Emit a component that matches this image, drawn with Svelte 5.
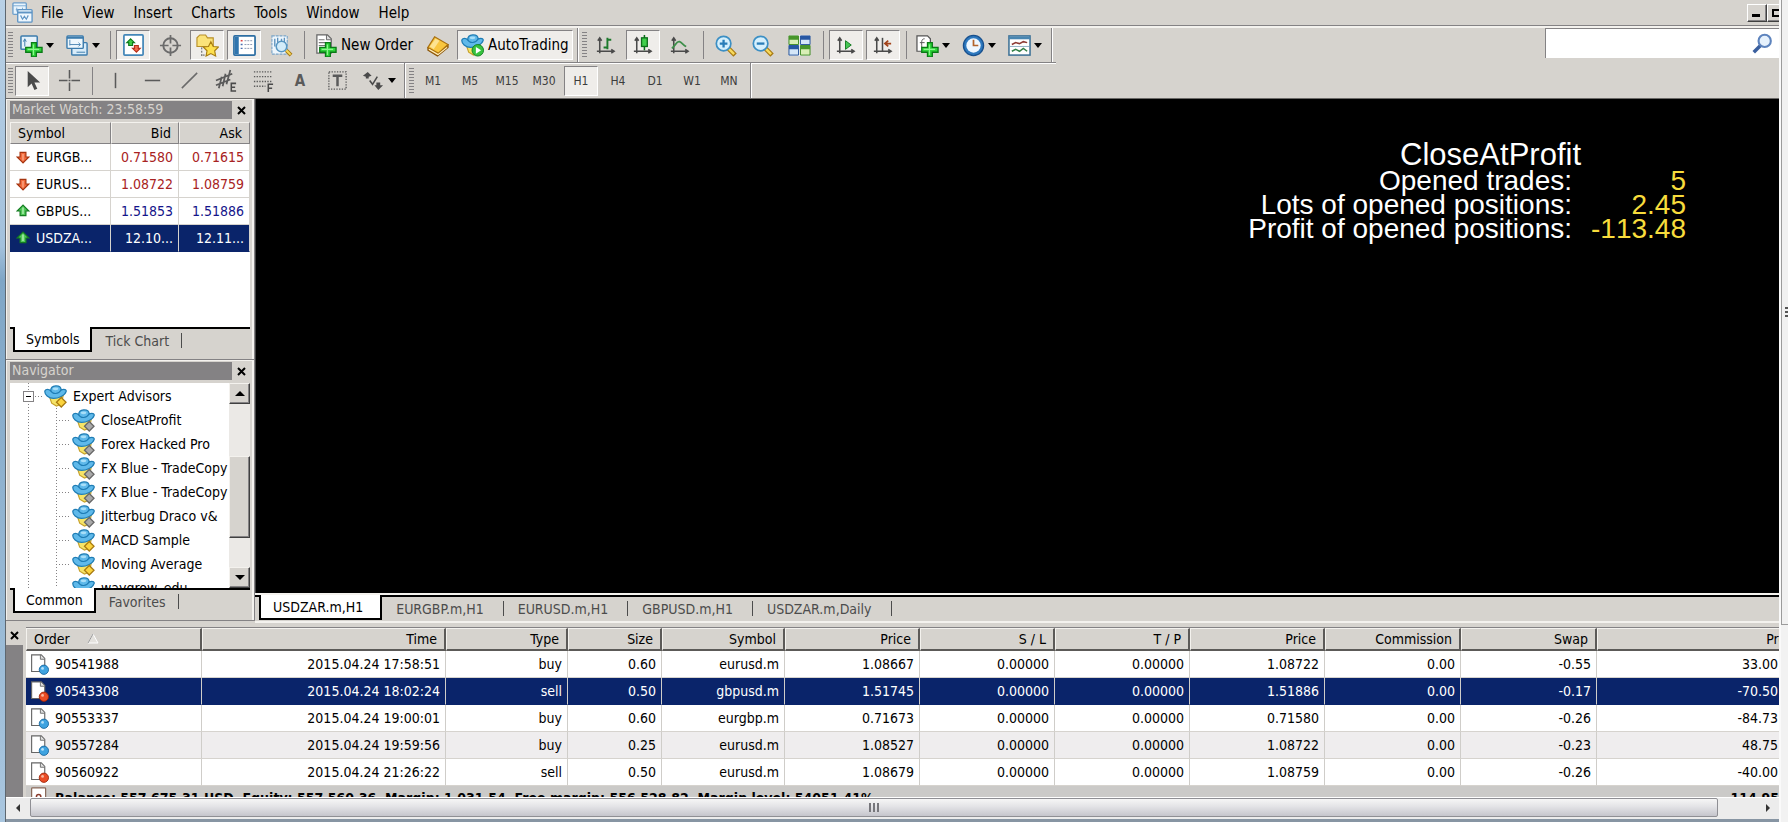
<script>
  const menus = ['File', 'View', 'Insert', 'Charts', 'Tools', 'Window', 'Help'];

  const plus = '<path d="M11 8h5v5h6v5h-6v5h-5v-5H5v-5h6z" fill="#2fd43a" stroke="#0a7a16" stroke-width="1.4"/><path d="M13 10v11M7 15h12" stroke="#8df58e" stroke-width="1.2"/>';
  const axes = '<path d="M6 20V4M3 18h18M4 7l2-3 2 3M18 16l3 2-3 2" stroke="#4a4a4a" stroke-width="1.6" fill="none"/>';
  const hat = '<path d="M5 10l3 9 5 3 5-2 2-9z" fill="#f6e468" stroke="#c6a02a" stroke-width="1.2"/><path d="M1 6c1-2 4-2 6 0 0-6 10-7 11-1 3-1 6 0 5 2-1 4-8 7-13 7S0 10 1 6z" fill="#5fb9ea" stroke="#1f7db5" stroke-width="1.3"/><path d="M7 6c2 4 8 4 11-1" stroke="#1f7db5" fill="none" stroke-width="1.2"/><ellipse cx="12" cy="4" rx="3" ry="1.5" fill="#a9dff8"/>';
  const lens = '<path d="M15 15l7 7" stroke="#a87912" stroke-width="5"/><path d="M15 15l6 6" stroke="#f7d95c" stroke-width="2.6"/><circle cx="10" cy="10" r="7.6" fill="#d6f0fd" stroke="#3c8fc4" stroke-width="1.8"/>';
  const page = '<path d="M3 1h11l4 4v15H3z" fill="#fff" stroke="#666" stroke-width="1.3"/><path d="M13 1v5h5" fill="#ddd" stroke="#666"/>';

  const art = {
    app: '<rect x="2" y="2" width="14" height="12" rx="1" fill="#e8f4fd" stroke="#6d9fcb" stroke-width="1.4"/><path d="M2 5h14M5 9h8M6 7v4M12 7v4" stroke="#7aa9d2"/><rect x="7" y="9" width="15" height="13" rx="1" fill="#eef7fe" stroke="#5e94c4" stroke-width="1.4"/><path d="M7 12h15" stroke="#5e94c4" stroke-width="2"/><path d="M10 15l2 4 2-3 2 3 2-4" fill="none" stroke="#5e94c4" stroke-width="1.2"/>',
    newChart: '<rect x="1" y="2" width="17" height="14" rx="1" fill="#e6f2fb" stroke="#3d7cad" stroke-width="1.6"/><path d="M5 13V6M3.500 8L5 5l1.500 3" stroke="#3d7cad" fill="none"/>' + '<g transform="translate(1 1)">' + plus + '</g>',
    profiles: '<rect x="6" y="9" width="16" height="13" rx="1" fill="#d9ecf9" stroke="#3d7cad" stroke-width="1.5"/><path d="M11 19h9" stroke="#3d7cad"/><rect x="1" y="2" width="17" height="13" rx="1" fill="#eef7fd" stroke="#3d7cad" stroke-width="1.5"/><path d="M1 4h17" stroke="#3d7cad" stroke-width="2"/><path d="M4 12V6M4 11h11M13 9l2 2-2 2" stroke="#4f88b5" fill="none"/>',
    watch: '<rect x="2" y="1" width="20" height="21" rx="1" fill="#fff" stroke="#4386b8" stroke-width="1.8"/><path d="M9 5l4 4h-2v3H7V9H5z" fill="#3ecb45" stroke="#0e7a1c" stroke-width="1.2"/><path d="M15 19l-4-4h2v-3h4v3h2z" fill="#f0694a" stroke="#b5301b" stroke-width="1.2"/>',
    target: '<circle cx="12" cy="12" r="7.500" fill="none" stroke="#6b6b6b" stroke-width="2"/><path d="M12 1v9M12 14v9M1 12h9M14 12h9" stroke="#6b6b6b" stroke-width="1.800"/>',
    navigator: '<path d="M1 13V4l3-3h6l2 3h6v9z" fill="#fbe37a" stroke="#b8902a" stroke-width="1.2"/><path d="M6 14v9M7 22h5" stroke="#555" stroke-dasharray="2 1.500"/><path d="M15.500 8l2.500 5 5.500.5-4 4 1 5.500-5-2.600-5 2.600 1-5.500-4-4L13 13z" fill="#fde04e" stroke="#a87d10" stroke-width="1.2"/>',
    terminal: '<rect x="1" y="2" width="22" height="20" rx="1" fill="#fff" stroke="#2d6ea3" stroke-width="1.8"/><rect x="2" y="3" width="4" height="18" fill="#2f75ae"/><path d="M8 7h2" stroke="#d44" stroke-width="1.6"/><path d="M8 11h2M8 15h2" stroke="#4a6fb0" stroke-width="1.4"/><path d="M12 7h8M12 11h8M12 15h8" stroke="#8a96b0" stroke-width="1" stroke-dasharray="2 1"/>',
    tester: '<rect x="2" y="2" width="16" height="19" fill="#eef6fc" stroke="#7aa5c8" stroke-width="1.2" stroke-dasharray="3 1"/><path d="M5 5v8M8 4v5M12 5v6M15 4v6" stroke="#5b91bd" stroke-width="1.4"/><path d="M17 17l5 5" stroke="#a87912" stroke-width="4"/><path d="M17 17l4.500 4.500" stroke="#f7d95c" stroke-width="2"/><circle cx="12" cy="13" r="5.500" fill="#d3ecfa" stroke="#5997c2" stroke-width="1.6"/>',
    order: page + '<path d="M5 6h6M5 9h10M5 12h10" stroke="#777" stroke-width="1.2"/>' + '<g transform="translate(1 1)">' + plus + '</g>',
    book: '<path d="M2 14v3l10 6 11-9v-3z" fill="#c07c14" stroke="#8a560c" stroke-width="1.2"/><path d="M2 14L9 3l14 8-10 9z" fill="#f9c63f" stroke="#a9700f" stroke-width="1.2"/><path d="M4 13l6-8 4 2-6 9z" fill="#fde391"/><path d="M3 16l9.500 5.500L22 14" stroke="#fff3c4" stroke-width="1.2" fill="none"/>',
    auto: hat + '<circle cx="17.500" cy="17" r="6" fill="#37c33f" stroke="#128020"/><path d="M15.500 13.500v7l5.500-3.500z" fill="#fff"/>',
    bars: axes + '<path d="M14 4v12M14 6h4M10 14h4" stroke="#1d7a2c" stroke-width="2"/>',
    candles: axes + '<path d="M14 1v16" stroke="#0c6e1a" stroke-width="1.6"/><rect x="11" y="4" width="6" height="9" fill="#3fcf4a" stroke="#0c6e1a" stroke-width="1.4"/>',
    line: axes + '<path d="M4 15C8 12 9 7 12 8s4 4 7 5" stroke="#3e8f4a" stroke-width="1.800" fill="none"/>',
    zoomIn: lens + '<path d="M10 6v8M6 10h8" stroke="#2a7db8" stroke-width="2.400"/>',
    zoomOut: lens + '<path d="M6 10h8" stroke="#2a7db8" stroke-width="2.400"/>',
    tile: '<rect x="1" y="1" width="22" height="22" fill="#f4f4f4"/><path d="M1 2h10v9H1zM13 12h10v10H13z" fill="#d9efb6" stroke="#3d8a22"/><path d="M13 2h10v9H13zM1 12h10v10H1z" fill="#d4e6f8" stroke="#25539b"/><path d="M1 2h10v4H1zM13 12h10v4H13z" fill="#47962a"/><path d="M13 2h10v4H13zM1 12h10v4H1z" fill="#2757a3"/>',
    scroll: axes + '<path d="M12 7v9l6-4.500z" fill="#45c653" stroke="#157a23"/>',
    shift: axes + '<path d="M12 4v14" stroke="#4a4a4a" stroke-width="1.600"/><path d="M21 10h-6M18 7l-3.500 3L18 13" stroke="#a3431a" stroke-width="1.800" fill="none"/>',
    indicators: '<path d="M1 2h11l3 3v13H1z" fill="#fff" stroke="#555" stroke-width="1.300"/><path d="M9 5c-4 0-3 4-3 9M4 9h5" stroke="#555" fill="none"/>' + '<g transform="translate(1 1)">' + plus + '</g>',
    clock: '<circle cx="12" cy="12" r="10.500" fill="#2d78be" stroke="#174f8d" stroke-width="1.400"/><circle cx="12" cy="12" r="7.500" fill="#eef7ff"/><path d="M12 6v6h5" stroke="#b2642c" stroke-width="1.800" fill="none"/>',
    template: '<rect x="1" y="2" width="22" height="20" fill="#fff" stroke="#3d7196" stroke-width="1.600"/><path d="M1 4h22" stroke="#4a86b1" stroke-width="3"/><path d="M4 11l4-2 4 1 4-2 4 1" stroke="#8d3a34" stroke-width="1.600" fill="none"/><path d="M2 13h20" stroke="#8fb0c6"/><path d="M4 18l4-2 4 2 4-3 4 3" stroke="#348048" stroke-width="1.600" fill="none"/>',
    cursor: '<path d="M7 2v17l4-4 3 7 3-1.500-3-6.500h6z" fill="#4a4a4a"/>',
    cross: '<path d="M12 1v9M12 14v9M1 12h9M14 12h9M11 12h2" stroke="#5a5a5a" stroke-width="1.600"/>',
    vline: '<path d="M12 4v16" stroke="#5a5a5a" stroke-width="1.600"/>',
    hline: '<path d="M4 12h16" stroke="#5a5a5a" stroke-width="1.600"/>',
    trend: '<path d="M4 20L20 4" stroke="#6a6a6a" stroke-width="1.600"/>',
    channel: '<path d="M1 12L18 5M1 17l15-6M4 20l3-12M8 18l3-13M12 16l4-15" stroke="#5a5a5a" stroke-width="1.800"/><path d="M22 15h-5v8h5M17 19h4" stroke="#4a4a4a" stroke-width="1.600" fill="none"/>',
    fibo: '<path d="M2 3h19M2 8h19M2 13h19M2 18h12" stroke="#5a5a5a" stroke-width="1.400" stroke-dasharray="1.400 1.400"/><path d="M22 16h-5v8M17 20h4" stroke="#4a4a4a" stroke-width="1.600" fill="none"/>',
    label: '<rect x="3" y="3" width="18" height="18" fill="none" stroke="#5a5a5a" stroke-width="1.400" stroke-dasharray="1.400 1.400"/><path d="M7 7h10M12 7v11" stroke="#5a5a5a" stroke-width="2.600"/>',
    arrows: '<path d="M1 7l5-4 4 4-3 1v2H4V8zM13 17h2v-3h4v3h3l-5 5z" fill="#4a4a4a"/><path d="M8 12l3 4 5-8" stroke="#4a4a4a" stroke-width="1.600" fill="none"/>',
    down: '<path d="M12 22L2 12h5V4h10v8h5z" fill="#f26a3c" stroke="#a5340f" stroke-width="2"/><path d="M12 18V7" stroke="#fbb594" stroke-width="2"/>',
    up: '<path d="M12 2L2 12h5v8h10v-8h5z" fill="#4fc957" stroke="#147c22" stroke-width="2"/><path d="M12 6v11" stroke="#c9f7c8" stroke-width="2"/>',
    expertOn: hat + '<path d="M18 13l5 5-5 5-5-5z" fill="#fbd43e" stroke="#a87a10" stroke-width="1.300"/>',
    expertOff: hat + '<path d="M18 13l5 5-5 5-5-5z" fill="#a9a9a9" stroke="#666" stroke-width="1.300"/>',
    buy: page + '<circle cx="17" cy="18" r="5.300" fill="#3fa3e0" stroke="#14639c"/><circle cx="15.500" cy="16.500" r="1.600" fill="#b5e0f8"/>',
    sell: page + '<circle cx="17" cy="18" r="5.300" fill="#ea4c25" stroke="#9c2408"/><circle cx="15.500" cy="16.500" r="1.600" fill="#fbb79d"/>',
    balance: '<rect x="3" y="1" width="16" height="22" rx="1" fill="#fff" stroke="#8a6a5a" stroke-width="1.400"/><circle cx="11" cy="11" r="2.500" fill="none" stroke="#8a3a2a" stroke-width="1.800"/>',
    find: '<path d="M2 22l8-8" stroke="#3a5f9e" stroke-width="4"/><circle cx="14.500" cy="9" r="7" fill="#e6f1fc" stroke="#5d83bd" stroke-width="2.400"/>',
  };

  const mainTools = [
    { icon: 'newChart', label: 'New chart', drop: true },
    { icon: 'profiles', label: 'Profiles', drop: true },
    { sep: true },
    { icon: 'watch', label: 'Market Watch', on: true },
    { icon: 'target', label: 'Data Window' },
    { icon: 'navigator', label: 'Navigator', on: true },
    { icon: 'terminal', label: 'Terminal', on: true },
    { icon: 'tester', label: 'Strategy Tester' },
    { sep: true },
    { icon: 'order', label: 'New Order', text: 'New Order' },
    { icon: 'book', label: 'MetaEditor' },
    { icon: 'auto', label: 'AutoTrading', text: 'AutoTrading', on: true },
    { grip: true },
    { icon: 'bars', label: 'Bar Chart' },
    { icon: 'candles', label: 'Candlesticks', on: true },
    { icon: 'line', label: 'Line Chart' },
    { sep: true },
    { icon: 'zoomIn', label: 'Zoom In' },
    { icon: 'zoomOut', label: 'Zoom Out' },
    { icon: 'tile', label: 'Tile Windows' },
    { sep: true },
    { icon: 'scroll', label: 'Auto Scroll', on: true },
    { icon: 'shift', label: 'Chart Shift', on: true },
    { sep: true },
    { icon: 'indicators', label: 'Indicators', drop: true },
    { icon: 'clock', label: 'Periods', drop: true },
    { icon: 'template', label: 'Templates', drop: true },
  ];

  const drawTools = [
    { icon: 'cursor', label: 'Cursor', on: true },
    { icon: 'cross', label: 'Crosshair' },
    { sep: true },
    { icon: 'vline', label: 'Vertical Line' },
    { icon: 'hline', label: 'Horizontal Line' },
    { icon: 'trend', label: 'Trendline' },
    { icon: 'channel', label: 'Equidistant Channel' },
    { icon: 'fibo', label: 'Fibonacci Retracement' },
    { glyph: 'A', label: 'Text' },
    { icon: 'label', label: 'Text Label' },
    { icon: 'arrows', label: 'Arrows', drop: true },
    { grip: true },
    ...['M1', 'M5', 'M15', 'M30', 'H1', 'H4', 'D1', 'W1', 'MN'].map((p) => ({ period: p, label: p, on: p === 'H1' })),
  ];

  const quotes = [
    { dir: 'down', symbol: 'EURGB...', bid: '0.71580', ask: '0.71615' },
    { dir: 'down', symbol: 'EURUS...', bid: '1.08722', ask: '1.08759' },
    { dir: 'up', symbol: 'GBPUS...', bid: '1.51853', ask: '1.51886' },
    { dir: 'up', symbol: 'USDZA...', bid: '12.10...', ask: '12.11...', selected: true },
  ];

  const experts = [
    ['CloseAtProfit', false],
    ['Forex Hacked Pro', false],
    ['FX Blue - TradeCopy', false],
    ['FX Blue - TradeCopy', false],
    ['Jitterbug Draco v&', false],
    ['MACD Sample', true],
    ['Moving Average', true],
    ['waygrow_edu', false],
  ];

  const stats = [
    ['Opened trades:', '5'],
    ['Lots of opened positions:', '2.45'],
    ['Profit of opened positions:', '-113.48'],
  ];

  const chartTabs = ['USDZAR.m,H1', 'EURGBP.m,H1', 'EURUSD.m,H1', 'GBPUSD.m,H1', 'USDZAR.m,Daily'];

  const columns = [
    ['Order', 176], ['Time', 244], ['Type', 122], ['Size', 94], ['Symbol', 123], ['Price', 135],
    ['S / L', 135], ['T / P', 135], ['Price', 135], ['Commission', 136], ['Swap', 136], ['Profit', null],
  ];

  const orders = [
    ['90541988', '2015.04.24 17:58:51', 'buy', '0.60', 'eurusd.m', '1.08667', '0.00000', '0.00000', '1.08722', '0.00', '-0.55', '33.00'],
    ['90543308', '2015.04.24 18:02:24', 'sell', '0.50', 'gbpusd.m', '1.51745', '0.00000', '0.00000', '1.51886', '0.00', '-0.17', '-70.50'],
    ['90553337', '2015.04.24 19:00:01', 'buy', '0.60', 'eurgbp.m', '0.71673', '0.00000', '0.00000', '0.71580', '0.00', '-0.26', '-84.73'],
    ['90557284', '2015.04.24 19:59:56', 'buy', '0.25', 'eurusd.m', '1.08527', '0.00000', '0.00000', '1.08722', '0.00', '-0.23', '48.75'],
    ['90560922', '2015.04.24 21:26:22', 'sell', '0.50', 'eurusd.m', '1.08679', '0.00000', '0.00000', '1.08759', '0.00', '-0.26', '-40.00'],
  ];
  const selectedOrder = '90543308';
</script>

{#snippet icon(name, size = 'm')}
  <svg class="icon {size}" viewBox="0 0 24 24" aria-hidden="true">{@html art[name]}</svg>
{/snippet}

{#snippet tools(items)}
  <span class="grip"></span>
  {#each items as t}
    {#if t.sep}
      <span class="sep"></span>
    {:else if t.grip}
      <span class="band"></span><span class="grip"></span>
    {:else}
      <button class="tool" class:on={t.on} class:wide={t.text} class:drop={t.drop} aria-label={t.label} aria-pressed={t.on ? 'true' : undefined}>
        {#if t.icon}{@render icon(t.icon)}{/if}
        {#if t.text}<span>{t.text}</span>{/if}
        {#if t.glyph}<b class="glyph">{t.glyph}</b>{/if}
        {#if t.period}<span class="period">{t.period}</span>{/if}
        {#if t.drop}<i class="caret"></i>{/if}
      </button>
    {/if}
  {/each}
  <span class="band"></span>
{/snippet}

{#snippet titleBar(text)}
  <header class="title">
    <h2>{text}</h2>
    <button class="close" aria-label="Close">{@render cross()}</button>
  </header>
{/snippet}

{#snippet cross()}
  <svg class="x" viewBox="0 0 9 9" aria-hidden="true"><path d="M1 1l7 7M8 1L1 8" stroke="#000" stroke-width="2" /></svg>
{/snippet}

<div class="screen">
  <div class="edge"></div>

  <main class="app">
    <div class="menubar">
      {@render icon('app')}
      <nav>
        {#each menus as m}<button>{m}</button>{/each}
      </nav>
      <div class="winbtns">
        <button aria-label="Minimize"><i class="min"></i></button>
        <button aria-label="Restore"><i class="restore"></i></button>
      </div>
    </div>

    <div class="bars">
      <div class="rows">
        <div class="toolbar first">{@render tools(mainTools)}</div>
        <div class="toolbar">{@render tools(drawTools)}</div>
      </div>
      <label class="search">
        <input type="text" aria-label="Search" />
        {@render icon('find', 's')}
      </label>
    </div>

    <div class="work">
      <aside>
        <section class="panel">
          {@render titleBar('Market Watch: 23:58:59')}
          <div class="sheet">
            <table class="quotes">
              <colgroup><col class="csym" /><col class="cbid" /><col /></colgroup>
              <thead><tr><th>Symbol</th><th>Bid</th><th>Ask</th></tr></thead>
              <tbody>
                {#each quotes as q}
                  <tr class={q.dir} class:selected={q.selected}>
                    <td class="name"><span class="sym">{@render icon(q.dir, 'xs')}{q.symbol}</span></td>
                    <td>{q.bid}</td>
                    <td>{q.ask}</td>
                  </tr>
                {/each}
              </tbody>
            </table>
          </div>
          <div class="tabs"><button class="tab active">Symbols</button><button class="tab">Tick Chart</button></div>
        </section>

        <section class="panel">
          {@render titleBar('Navigator')}
          <div class="sheet nav">
            <ul class="tree">
              <li class="root"><span class="box"></span><i class="dash"></i>{@render icon('expertOn')}Expert Advisors</li>
              {#each experts as [name, active]}
                <li><i class="dash"></i>{@render icon(active ? 'expertOn' : 'expertOff')}{name}</li>
              {/each}
            </ul>
            <div class="vbar">
              <button aria-label="Scroll up"><i class="tri up"></i></button>
              <div class="track"><div class="thumb"></div></div>
              <button aria-label="Scroll down"><i class="tri"></i></button>
            </div>
          </div>
          <div class="tabs"><button class="tab active">Common</button><button class="tab">Favorites</button></div>
        </section>
      </aside>

      <section class="chart">
        <div class="canvas">
          <div class="overlay">
            <h1>CloseAtProfit</h1>
            <dl>
              {#each stats as [k, v]}<dt>{k}</dt><dd>{v}</dd>{/each}
            </dl>
          </div>
        </div>
        <div class="tabs charts">
          {#each chartTabs as t, i}<button class="tab" class:active={i === 0}>{t}</button>{/each}
        </div>
      </section>
    </div>

    <section class="terminal">
      <div class="side">
        <button class="close" aria-label="Close terminal">{@render cross()}</button>
        <div class="sidebar"></div>
      </div>
      <div class="grid">
        <table class="orders">
          <colgroup>
            {#each columns as [, w]}<col style:width={w ? `${w}px` : 'auto'} />{/each}
          </colgroup>
          <thead>
            <tr>
              {#each columns as [name], i}
                <th>{name}{#if i === 0}<svg class="sort" viewBox="0 0 12 11" aria-hidden="true"><path d="M6 1l5 9H1z" fill="#e4e2de" stroke="#fff" /><path d="M6 1L1 10" stroke="#999" /></svg>{/if}</th>
              {/each}
            </tr>
          </thead>
          <tbody>
            {#each orders as row}
              <tr class:selected={row[0] === selectedOrder}>
                {#each row as cell, i}
                  <td>{#if i === 0}<span class="ticket">{@render icon(row[2], 's')}{cell}</span>{:else}{cell}{/if}</td>
                {/each}
              </tr>
            {/each}
          </tbody>
          <tfoot>
            <tr>
              <td colspan="11"><span class="ticket">{@render icon('balance', 's')}<span>Balance: 557 675.31 USD&nbsp; Equity: 557 560.36&nbsp; Margin: 1 031.54&nbsp; Free margin: 556 528.82&nbsp; Margin level: 54051.41%</span></span></td>
              <td>-114.95</td>
            </tr>
          </tfoot>
        </table>
      </div>
    </section>

    <div class="hbar">
      <button aria-label="Scroll left"><i class="htri left"></i></button>
      <div class="hthumb"><i></i><i></i><i></i></div>
      <button class="end" aria-label="Scroll right"><i class="htri"></i></button>
    </div>
  </main>

  <div class="outer"><div class="outerthumb"><i></i><i></i><i></i></div></div>
</div>

<style>
  :global(body) { margin: 0; background: #d6d3ce; }
  * { box-sizing: border-box; }
  button { font: inherit; color: inherit; border: 0; padding: 0; margin: 0; background: none; white-space: nowrap; }
  h1, h2, ul, dl, dd { margin: 0; padding: 0; font-weight: 400; }
  table { border-collapse: separate; border-spacing: 0; table-layout: fixed; }

  .screen {
    display: grid;
    grid-template-columns: 6px minmax(0, 1fr) 9px;
    height: 100vh;
    overflow: hidden;
    font-family: "DejaVu Sans Condensed", "DejaVu Sans", sans-serif;
    font-size: 14px;
    color: #000;
  }
  .edge { background: linear-gradient(#b9d1e6, #a3c1dc 30%, #7fa6c6 34%, #a9c6df); border-right: 1px solid #5e676f; }
  .app { display: flex; flex-direction: column; min-width: 0; min-height: 0; background: #d6d3ce; }

  .icon { display: block; flex: none; }
  .icon.m { width: 23px; height: 23px; }
  .icon.s { width: 21px; height: 21px; }
  .icon.xs { width: 14px; height: 14px; }

  .menubar { display: flex; align-items: center; flex: none; height: 26px; padding-left: 5px; border-bottom: 1px solid #848284; font-size: 15px; }
  nav { display: flex; flex: 1; gap: 19px; padding-left: 7px; }
  .winbtns { display: flex; width: 32px; overflow: hidden; }
  .winbtns button { flex: none; width: 20px; height: 18px; padding: 4px; background: #d6d3ce; border: 1px solid; border-color: #fff #404040 #404040 #fff; box-shadow: inset -1px -1px #848284; }
  .min { display: block; width: 8px; height: 3px; margin-top: 5px; background: #000; }
  .restore { display: block; width: 10px; height: 8px; border: 2px solid #000; }

  .bars { display: flex; flex: none; justify-content: space-between; border-top: 2px solid #f4f2ee; }
  .toolbar { display: flex; align-items: center; height: 35px; width: max-content; padding-left: 2px; }
  .toolbar.first { border-bottom: 1px solid #848284; box-shadow: 0 1px #fff; }
  .grip { width: 5px; height: 26px; margin-right: 1px; background: repeating-linear-gradient(#848284 0 1px, transparent 1px 3px); }
  .sep { width: 1px; height: 28px; margin: 0 4px; background: #848284; }
  .band { align-self: stretch; width: 2px; margin: 0 3px 0 2px; background: #848284; border-right: 1px solid #fff; }
  .tool { display: flex; align-items: center; justify-content: center; width: 34px; height: 30px; margin: 0 2px 0 1px; border: 1px solid transparent; }
  .tool.on { background: #efedea; border-color: #848284 #fff #fff #848284; }
  .tool.drop { width: 43px; gap: 3px; }
  .tool.wide { width: auto; padding: 0 3px; gap: 4px; font-size: 15px; }
  .caret { width: 0; height: 0; border: 4px solid transparent; border-top: 5px solid #000; border-bottom: 0; }
  .glyph { font-size: 15px; color: #5a5a5a; }
  .period { font-size: 12px; color: #3c3c3c; }
  .search { display: flex; align-items: center; width: 234px; height: 30px; padding-right: 6px; background: #fff; border-left: 1px solid #848284; border-top: 1px solid #848284; }
  .search input { flex: 1; min-width: 0; height: 26px; border: 0; outline: 0; background: none; font: inherit; }

  .work { display: flex; flex: 1; min-height: 0; border-top: 1px solid #6b6967; }
  aside { display: flex; flex-direction: column; flex: none; width: 249px; }
  .panel { display: flex; flex-direction: column; height: 261px; padding: 2px 4px 7px 4px; border-right: 1px solid #848284; border-bottom: 1px solid #848284; box-shadow: inset 1px 1px #f4f2ee, inset -2px 0 #f4f2ee; }
  .title { display: flex; flex: none; height: 18px; margin-bottom: 3px; }
  .title h2 { flex: 1; padding-left: 2px; font-size: 14px; line-height: 17px; background: #848284; color: #d6d3ce; overflow: hidden; white-space: nowrap; }
  .close { display: grid; place-items: center; width: 18px; height: 18px; }
  .x { width: 9px; height: 9px; }
  .sheet { flex: 1; min-height: 0; background: #fff; overflow: hidden; }
  .quotes { width: 100%; }
  .csym { width: 101px; }
  .cbid { width: 68px; }
  .quotes th { height: 22px; padding: 0 7px; font-weight: 400; text-align: right; background: #d6d3ce; border: 1px solid; border-color: #f4f2ee #848284 #848284 #f4f2ee; }
  .quotes th:first-child, .quotes td:first-child { text-align: left; }
  .quotes td { height: 27px; padding: 0 5px 0 0; text-align: right; border-right: 1px solid #d6d3ce; border-bottom: 1px solid #d6d3ce; white-space: nowrap; }
  .quotes td:first-child { padding-left: 6px; }
  .quotes .down td { color: #a82222; }
  .quotes .up td { color: #14148a; }
  .quotes tr td.name { color: #000; }
  .sym { display: flex; align-items: center; gap: 6px; }
  .quotes tr.selected td { color: #fff; background: #0a246a; border-bottom-color: #0a246a; }

  .tabs { display: flex; flex: none; height: 25px; padding-left: 3px; border-top: 2px solid #000; }
  .tab { height: 24px; padding: 0 13px; color: #4c4c4c; position: relative; }
  .tab.active { margin-top: -2px; height: 25px; color: #000; background: #fff; border: 2px solid #000; border-top: 0; padding: 0 11px; }
  .tab:not(.active)::after { content: ""; position: absolute; right: 0; top: 4px; width: 1px; height: 15px; background: #4c4c4c; }

  .sheet.nav { display: flex; }
  .tree { flex: 1; min-width: 0; overflow: hidden; list-style: none; background: repeating-linear-gradient(#848284 0 1px, transparent 1px 3px) 18px 0 / 1px 100% no-repeat; }
  .tree li { display: flex; align-items: center; height: 24px; gap: 1px; padding-left: 46px; white-space: nowrap; background: repeating-linear-gradient(#848284 0 1px, transparent 1px 3px) 46px 0 / 1px 100% no-repeat; }
  .tree li .icon { margin-right: 5px; }
  .tree .root { margin-top: 1px; padding-left: 13px; background: none; }
  .dash { width: 15px; height: 1px; background: repeating-linear-gradient(90deg, #848284 0 1px, transparent 1px 3px); }
  .root .dash { width: 8px; }
  .box { display: grid; place-items: center; width: 11px; height: 11px; background: #fff; border: 1px solid #848284; }
  .box::before { content: ""; width: 5px; height: 1px; background: #000; }
  .vbar { display: flex; flex-direction: column; width: 21px; background: #ebe9e6; }
  .vbar button, .thumb { display: grid; place-items: center; height: 21px; background: #d6d3ce; border: 1px solid; border-color: #f4f2ee #404040 #404040 #f4f2ee; box-shadow: inset -1px -1px #848284; }
  .track { flex: 1; padding-top: 52px; }
  .thumb { height: 82px; }
  .tri { border: 5px solid transparent; border-top-color: #000; border-bottom: 0; }
  .tri.up { border-top: 0; border-bottom: 5px solid #000; }

  .chart { display: flex; flex: 1; flex-direction: column; min-width: 0; padding-bottom: 2px; }
  .canvas { display: flex; flex: 1; justify-content: flex-end; align-items: flex-start; background: #000; border-left: 1px solid #404040; padding: 41px 93px 0 0; }
  .overlay { font-family: "Liberation Sans", Arial, sans-serif; font-kerning: none; color: #fff; }
  .overlay h1 { font-size: 31px; line-height: 29px; padding-right: 105px; text-align: right; }
  .overlay dl { display: grid; grid-template-columns: auto 114px; font-size: 28px; line-height: 24px; text-align: right; }
  .overlay dd { color: #f7dc3c; }
  .tabs.charts { height: 28px; margin-top: 2px; padding-left: 4px; border-bottom: 2px solid #f4f2ee; box-shadow: 0 -2px #f4f2ee; }
  .charts .tab { padding: 0 20px 0 14px; }
  .charts .tab.active { padding: 0 17px 0 12px; }

  .terminal { display: flex; flex: none; height: 172px; }
  .side { display: flex; flex-direction: column; width: 20px; }
  .side .close { width: 17px; height: 20px; }
  .sidebar { flex: 1; width: 17px; background: #848284; }
  .grid { flex: 1; min-width: 0; margin-top: 2px; overflow: hidden; border-top: 1px solid #848284; }
  .orders { width: calc(100% + 35px); background: #fff; }
  .orders th { height: 23px; padding: 0 7px; font-weight: 400; text-align: right; background: #d6d3ce; border: solid; border-width: 1px 2px 2px 1px; border-color: #f4f2ee #5c5a58 #5c5a58 #f4f2ee; }
  .orders th:first-child, .orders td:first-child { text-align: left; }
  .orders th:last-child { padding-right: 13px; }
  .orders td { height: 27px; padding: 0 5px 0 0; text-align: right; white-space: nowrap; border-right: 1px solid #cfcdc9; border-bottom: 1px solid #d6d3ce; }
  .orders td:last-child { padding-right: 35px; }
  .orders tbody tr:nth-child(even) td { background: #efedee; }
  .orders tbody tr.selected td { background: #0a246a; color: #fff; border-bottom-color: #0a246a; }
  .ticket { display: flex; align-items: center; gap: 5px; padding-left: 3px; }
  .sort { width: 12px; height: 11px; margin-left: 17px; }
  .orders tfoot td { height: 23px; font-weight: 700; background: #cbcac8; border: 0; }

  .hbar { display: flex; flex: none; align-items: center; height: 25px; padding-bottom: 2px; background: #ececec; border-top: 1px solid #fff; border-bottom: 3px solid #8795a3; }
  .hbar button { display: grid; place-items: center; width: 24px; height: 20px; }
  .hbar .end { width: 61px; padding-left: 38px; }
  .hthumb { display: flex; flex: 1; align-items: center; justify-content: center; gap: 2px; height: 19px; border: 1px solid #8f8f94; border-radius: 2px; background: linear-gradient(#f6f6f6, #e3e3e6 45%, #c5c5cc); }
  .hthumb i { width: 2px; height: 9px; background: #77777c; }
  .htri { border: 4px solid transparent; border-left-color: #333; border-right: 0; }
  .htri.left { border-left: 0; border-right: 4px solid #333; }

  .outer { background: #f2f2f2; border-left: 2px solid #fafafa; }
  .outerthumb { display: flex; flex-direction: column; align-items: flex-end; justify-content: center; gap: 2px; height: 76%; border: 1px solid #9b9b9b; border-width: 0 0 1px 1px; background: #f1f1f1; }
  .outerthumb i { width: 3px; height: 2px; background: #555; }
</style>
